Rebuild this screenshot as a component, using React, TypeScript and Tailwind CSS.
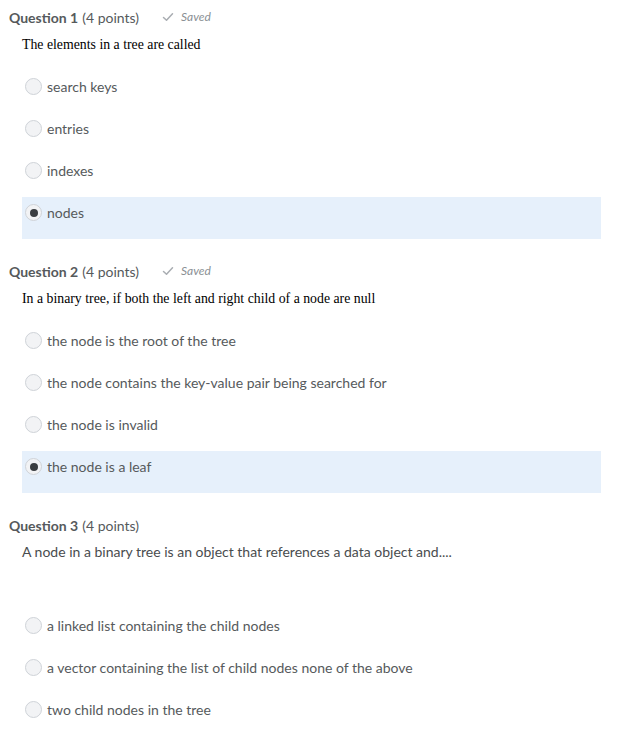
import React from "react";

type Question = {
  num: number;
  text: string;
  serif: boolean;
  saved: boolean;
  options: string[];
  selected: number;
  extraGap?: boolean;
};

const questions: Question[] = [
  {
    num: 1,
    text: "The elements in a tree are called",
    serif: true,
    saved: true,
    options: ["search keys", "entries", "indexes", "nodes"],
    selected: 3,
  },
  {
    num: 2,
    text: "In a binary tree, if both the left and right child of a node are null",
    serif: true,
    saved: true,
    options: [
      "the node is the root of the tree",
      "the node contains the key-value pair being searched for",
      "the node is invalid",
      "the node is a leaf",
    ],
    selected: 3,
  },
  {
    num: 3,
    text: "A node in a binary tree is an object that references a data object and....",
    serif: false,
    saved: false,
    options: [
      "a linked list containing the child nodes",
      "a vector containing the list of child nodes none of the above",
      "two child nodes in the tree",
    ],
    selected: -1,
    extraGap: true,
  },
];

function Check() {
  return (
    <svg width="12" height="10" viewBox="0 0 12 10" fill="none">
      <path d="M1.5 5.5 L4.5 8.3 L10.5 1.8" stroke="#a9adb2" strokeWidth="1.5" strokeLinecap="round" strokeLinejoin="round" />
    </svg>
  );
}

function Radio({ checked }: { checked: boolean }) {
  return (
    <span className="flex h-[17px] w-[17px] shrink-0 items-center justify-center rounded-full border border-[#cfd3d8] bg-[#f2f3f5]">
      {checked && <span className="h-[8px] w-[8px] rounded-full bg-[#3a3d40]" />}
    </span>
  );
}

export default function App() {
  return (
    <div className="min-h-screen bg-white pt-[7px] font-['Lato',sans-serif] text-[#565a5c]">
      {questions.map((q) => (
        <div key={q.num} className="mb-[22px]">
          <div className="flex h-[20px] items-center pl-[9px] text-[14px] text-[#565a5c]">
            <span className="font-bold">Question {q.num}</span>
            <span className="ml-[4px]">(4 points)</span>
            {q.saved && (
              <span className="ml-[23px] flex items-center gap-[7px] text-[12px] italic text-[#8a8f94]">
                <Check />
                Saved
              </span>
            )}
          </div>
          <div
            className={
              q.serif
                ? "mt-[8px] mb-[-1px] flex h-[20px] items-center pl-[22px] font-['Liberation_Serif',serif] text-[13.8px] text-black"
                : "mt-[6px] flex h-[20px] items-center pl-[22px] text-[14px] text-[#494c4e]"
            }
          >
            {q.text}
          </div>
          <div className={q.extraGap ? "mt-[49px]" : "mt-[17px]"}>
            {q.options.map((opt, i) => (
              <div
                key={opt}
                className={
                  i === q.selected
                    ? "ml-[22px] mr-[35px] flex h-[42px] items-start gap-[5px] bg-[#e6f0fb] pl-[3px] pt-[7px] text-[14px]"
                    : "ml-[22px] mr-[35px] flex h-[42px] items-start gap-[5px] pl-[3px] pt-[7px] text-[14px]"
                }
              >
                <Radio checked={i === q.selected} />
                <span className="leading-[17px]">{opt}</span>
              </div>
            ))}
          </div>
        </div>
      ))}
    </div>
  );
}
